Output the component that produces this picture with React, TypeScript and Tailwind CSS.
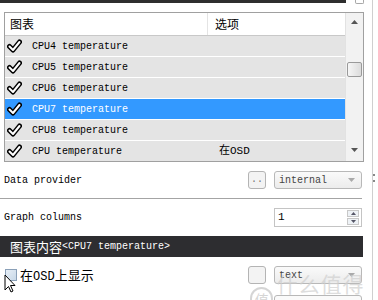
import React from "react";

const rows = [
  { name: "CPU4 temperature", opt: "" },
  { name: "CPU5 temperature", opt: "" },
  { name: "CPU6 temperature", opt: "" },
  { name: "CPU7 temperature", opt: "", selected: true },
  { name: "CPU8 temperature", opt: "" },
  { name: "CPU temperature", opt: "在OSD" },
];

const mono = "font-['Liberation_Mono','Noto_Sans_CJK_SC',monospace]";
const cjk = "font-['Noto_Sans_CJK_SC','Liberation_Sans',sans-serif]";

const Check = () => (
  <svg width="15" height="14" viewBox="0 0 15 14">
    <path d="M2.5 7.5 L6 11 L12.5 3" fill="none" stroke="#000" strokeWidth="5" strokeLinecap="round" strokeLinejoin="round" />
    <path d="M2.5 7.5 L6 11 L12.5 3" fill="none" stroke="#fff" strokeWidth="2" strokeLinecap="round" strokeLinejoin="round" />
  </svg>
);

const Arrow = ({ up }: { up?: boolean }) => (
  <svg width="7" height="4" viewBox="0 0 7 4">
    <path d={up ? "M0 4 L3.5 0 L7 4 Z" : "M0 0 L3.5 4 L7 0 Z"} fill="#555" />
  </svg>
);

const SmallButton = ({ label }: { label?: string }) => (
  <div className="w-[18px] h-[18px] border border-[#b4b4b4] rounded-[3px] bg-[#f3f3f3] flex items-center justify-center">
    <span className={`${mono} text-[10px] leading-none text-[#777]`}>{label}</span>
  </div>
);

const Dropdown = ({ value }: { value: string }) => (
  <div className="w-[88px] h-[18px] border border-[#b8b8b8] rounded-[3px] bg-gradient-to-b from-[#fafafa] to-[#ececec] flex items-center pl-[4px] pr-[6px]">
    <span className={`${mono} text-[10px] text-[#444] flex-1`}>{value}</span>
    <svg width="7" height="4" viewBox="0 0 7 4">
      <path d="M0 0 L3.5 4 L7 0 Z" fill="#aaa" />
    </svg>
  </div>
);

export default function App() {
  return (
    <div className="relative w-[378px] h-[300px] overflow-hidden bg-white flex">
      <div className="w-[364px] flex flex-col shrink-0">
        {/* top strip */}
        <div className="h-[12px] shrink-0 flex items-start">
          <div className="w-[346px] h-[3px] bg-[#2e2e2e]" />
          <div className="ml-[9px] w-[9px] h-[4px] border border-t-0 border-[#a8a8a8] rounded-b-[2px]" />
        </div>

        {/* table */}
        <div className="ml-[4px] shrink-0 w-[360px] h-[150px] border border-[#a0a0a0] flex overflow-hidden">
          <div className="w-[340px] flex flex-col">
            <div className="h-[23px] shrink-0 flex border-b border-[#c8c8c8] bg-white">
              <div className={`${cjk} w-[203px] pl-[5px] text-[12px] leading-[22px] border-r border-[#e4e4e4]`}>图表</div>
              <div className={`${cjk} pl-[7px] text-[12px] leading-[22px]`}>选项</div>
            </div>
            {rows.map((r, i) => (
              <div
                key={i}
                className={`h-[21px] shrink-0 flex items-center border-b border-white ${r.selected ? "bg-[#3399ff] text-white" : "bg-[#e4e4e4] text-black"}`}
              >
                <div className="w-[27px] pl-[2px] flex items-center">
                  <Check />
                </div>
                <div className={`${mono} text-[10px] w-[187px]`}>{r.name}</div>
                <div className={`${mono} text-[11px]`}>{r.opt}</div>
              </div>
            ))}
          </div>
          <div className="w-[18px] bg-[#f2f2f2] border-l border-[#e2e2e2] flex flex-col items-center">
            <div className="mt-[7px]">
              <Arrow up />
            </div>
            <div className="mt-[38px] w-[15px] h-[15px] shrink-0 border border-[#9a9a9a] rounded-[2px] bg-gradient-to-r from-[#f6f6f6] to-[#dcdcdc]" />
            <div className="mt-[71px]">
              <Arrow />
            </div>
          </div>
        </div>

        {/* data provider */}
        <div className="mt-[8px] shrink-0 h-[20px] flex items-center pl-[4px] pr-[2px]">
          <span className={`${mono} text-[10px] text-black`}>Data provider</span>
          <div className="ml-auto flex items-center gap-[8px]">
            <SmallButton label=".." />
            <Dropdown value="internal" />
          </div>
        </div>

        <div className="mt-[8px] shrink-0 h-px w-[362px] bg-[#a4a4a4]" />

        {/* graph columns */}
        <div className="mt-[8px] shrink-0 h-[20px] flex items-center pl-[4px] pr-[2px]">
          <span className={`${mono} text-[10px] text-black`}>Graph columns</span>
          <div className="ml-auto w-[88px] h-[19px] border border-[#c4c4c4] bg-white flex items-center pl-[3px] pr-[2px]">
            <span className={`${mono} text-[11px] flex-1`}>1</span>
            <div className="flex flex-col gap-px">
              <div className="w-[12px] h-[7px] border border-[#c8c8c8] bg-[#eef2f6] flex items-center justify-center">
                <svg width="5" height="3" viewBox="0 0 5 3"><path d="M0 3 L2.5 0 L5 3 Z" fill="#556" /></svg>
              </div>
              <div className="w-[12px] h-[7px] border border-[#c8c8c8] bg-[#eef2f6] flex items-center justify-center">
                <svg width="5" height="3" viewBox="0 0 5 3"><path d="M0 0 L2.5 3 L5 0 Z" fill="#556" /></svg>
              </div>
            </div>
          </div>
        </div>

        {/* content header */}
        <div className="mt-[9px] shrink-0 h-[21px] w-[363px] bg-[#2d2d30] flex items-center pl-[10px]">
          <span className={`${cjk} text-[13px] text-white`}>图表内容</span>
          <span className={`${mono} text-[10px] text-white`}>&lt;CPU7 temperature&gt;</span>
        </div>

        {/* show in OSD */}
        <div className="mt-[8px] shrink-0 h-[20px] flex items-center pl-[5px] pr-[2px]">
          <div className="w-[12px] h-[12px] border border-[#8aa0b8] bg-gradient-to-br from-[#e6eef6] to-[#c8d8e8]" />
          <span className={`${cjk} ml-[3px] text-[13px] text-black`}>
            在<span className={`${mono} text-[12px]`}>OSD</span>上显示
          </span>
          <div className="ml-auto flex items-center gap-[8px]">
            <SmallButton />
            <Dropdown value="text" />
          </div>
        </div>

        <div className="mt-[10px] shrink-0 ml-[274px] w-[88px] h-[18px] border border-[#b8b8b8] rounded-[3px] bg-[#fafafa]" />
      </div>

      <div className="ml-[8px] w-px h-full bg-[#cfcfcf] relative">
        <div className="absolute top-[174px] left-[1px] w-[2px] h-[8px] border-t-2 border-b-2 border-[#888]" />
      </div>

      {/* cursor overlay */}
      <svg className="absolute left-[4px] top-[274px]" width="12" height="19" viewBox="0 0 12 19">
        <path d="M1 1 L1 16 L4.5 12.5 L7 18 L9 17 L6.5 11.5 L11 11.5 Z" fill="#fff" stroke="#000" strokeWidth="1" />
      </svg>

      {/* watermark */}
      <div className="absolute left-[250px] top-[268px] flex items-center gap-[3px] opacity-70 pointer-events-none">
        <div className={`${cjk} w-[25px] h-[25px] rounded-full border-2 border-[#c4c4c4] text-[14px] text-[#c4c4c4] flex items-center justify-center`}>值</div>
        <span className={`${cjk} text-[21px] text-[#cfcfcf] tracking-[1px]`}>什么值得买</span>
      </div>
    </div>
  );
}
